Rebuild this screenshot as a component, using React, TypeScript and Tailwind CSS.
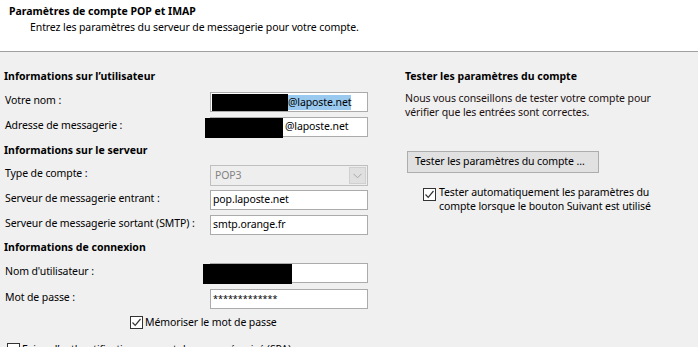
import React from "react";

function Check({ checked }: { checked: boolean }) {
  return (
    <div className="w-[13px] h-[13px] border border-[#333333] bg-white flex items-center justify-center shrink-0">
      {checked && (
        <svg width="11" height="11" viewBox="0 0 11 11">
          <path d="M1.5 5.5 L4.2 8.3 L9.5 2" fill="none" stroke="#333333" strokeWidth="1.2" />
        </svg>
      )}
    </div>
  );
}

function Row({ label, children, mt }: { label: string; children: React.ReactNode; mt: string }) {
  return (
    <div className={`flex items-start ${mt}`}>
      <div className="w-[206px] pl-[1px] leading-[16px]">{label}</div>
      {children}
    </div>
  );
}

function Input({ children, h = "h-[20px]" }: { children?: React.ReactNode; h?: string }) {
  return (
    <div className={`relative w-[158px] ${h} bg-white border border-[#ababab] flex items-center pl-[2px] whitespace-nowrap`}>
      {children}
    </div>
  );
}

export default function App() {
  return (
    <div className="w-[698px] h-[347px] overflow-hidden bg-[#f0f0f0] text-black text-[10.5px] tracking-[-0.1px] font-['Noto_Sans',sans-serif]">
      <div className="h-[52px] bg-white border-b border-[#a0a0a0] pt-[4px]">
        <div className="pl-[9px] font-bold tracking-normal leading-[14px]">Paramètres de compte POP et IMAP</div>
        <div className="pl-[30px] mt-[2px] leading-[14px]">
          Entrez les paramètres du serveur de messagerie pour votre compte.
        </div>
      </div>
      <div className="flex">
        <div className="w-[370px] pl-[4px] flex flex-col">
          <div className="mt-[16px] font-bold tracking-normal leading-[16px]">Informations sur l’utilisateur</div>
          <Row label="Votre nom :" mt="mt-[8px]">
            <Input>
              <div className="w-[76px] h-[17px] bg-black -ml-[1px]" />
              <span className="bg-[#99c9ef] leading-[15px]">@laposte.net</span>
            </Input>
          </Row>
          <Row label="Adresse de messagerie :" mt="mt-[5px]">
            <Input>
              <div className="absolute left-[-6px] top-0 w-[78px] h-[20px] bg-black" />
              <span className="ml-[72px]">@laposte.net</span>
            </Input>
          </Row>
          <div className="mt-[5px] font-bold tracking-normal leading-[16px]">Informations sur le serveur</div>
          <Row label="Type de compte :" mt="mt-[7px]">
            <div className="w-[158px] h-[21px] bg-[#eeeeee] border border-[#bfbfbf] flex items-center pl-[4px] text-[#838383]">
              <span className="flex-1">POP3</span>
              <div className="w-[17px] h-[17px] mr-[1px] bg-[#e0e0e0] border border-[#d0d0d0] flex items-center justify-center">
                <svg width="9" height="6" viewBox="0 0 9 6">
                  <path d="M0.5 0.8 L4.5 4.8 L8.5 0.8" fill="none" stroke="#a6a6a6" strokeWidth="1" />
                </svg>
              </div>
            </div>
          </Row>
          <Row label="Serveur de messagerie entrant :" mt="mt-[4px]">
            <Input>pop.laposte.net</Input>
          </Row>
          <Row label="Serveur de messagerie sortant (SMTP) :" mt="mt-[5px]">
            <Input>smtp.orange.fr</Input>
          </Row>
          <div className="mt-[4px] font-bold tracking-normal leading-[16px]">Informations de connexion</div>
          <Row label="Nom d'utilisateur :" mt="mt-[8px]">
            <Input>
              <div className="absolute left-[-8px] top-0 w-[89px] h-[20px] bg-black" />
            </Input>
          </Row>
          <Row label="Mot de passe :" mt="mt-[6px]">
            <Input>
              <span className="text-[9px] tracking-normal">*************</span>
            </Input>
          </Row>
          <div className="mt-[5px] flex items-center gap-[2px] pl-[126px] leading-[16px]">
            <Check checked />
            <span>Mémoriser le mot de passe</span>
          </div>
          <div className="mt-[11px] flex items-center gap-[2px] pl-[3px] leading-[16px]">
            <Check checked={false} />
            <span>Exiger l’authentification par mot de passe sécurisé (SPA)</span>
          </div>
        </div>
        <div className="ml-[35px] flex flex-col">
          <div className="mt-[16px] font-bold tracking-normal leading-[16px]">Tester les paramètres du compte</div>
          <div className="mt-[8px] leading-[13.5px] text-[#1a0f0f]">
            Nous vous conseillons de tester votre compte pour
            <br />
            vérifier que les entrées sont correctes.
          </div>
          <div className="mt-[32px] ml-[2px] w-[192px] h-[22px] bg-[#e1e1e1] border border-[#adadad] flex items-center pl-[7px]">
            Tester les paramètres du compte ...
          </div>
          <div className="mt-[13px] ml-[18px] flex items-start gap-[3px]">
            <div className="mt-[2px]">
              <Check checked />
            </div>
            <div className="leading-[13.5px]">
              Tester automatiquement les paramètres du
              <br />
              compte lorsque le bouton Suivant est utilisé
            </div>
          </div>
        </div>
      </div>
    </div>
  );
}
